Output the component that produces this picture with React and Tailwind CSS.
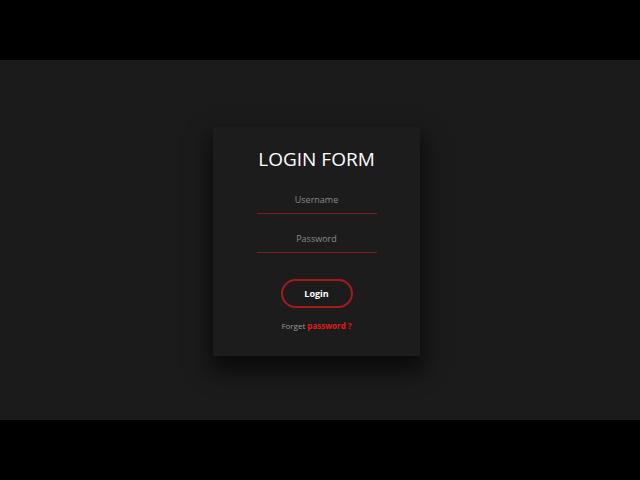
import React from "react";

/* ── Login card ── */
const LoginCard = () => (
  <div className="mr-[7px] mt-[3px] flex h-[229px] w-[207px] flex-col items-center bg-[#1c1c1c] pt-[18px] shadow-[0_12px_20px_4px_rgba(0,0,0,0.6)]">
    <h1 className="text-[19px] leading-[28px] font-medium text-white">LOGIN FORM</h1>

    <input
      type="text"
      placeholder="Username"
      className="mt-[12px] h-[29px] w-[120px] border-b border-[#801c1c] bg-transparent text-center text-[9px] text-white outline-none placeholder:text-[#8a8a8a]"
    />
    <input
      type="password"
      placeholder="Password"
      className="mt-[10px] h-[29px] w-[120px] border-b border-[#801c1c] bg-transparent text-center text-[9px] text-white outline-none placeholder:text-[#8a8a8a]"
    />

    <button className="mt-[26px] h-[29px] w-[72px] rounded-full border-2 border-[#a31b1b] text-[9px] font-bold text-white">
      Login
    </button>

    <p className="mt-[12px] text-[8px] text-[#9a9a9a]">
      Forget <span className="font-bold text-[#e01b1b]">password ?</span>
    </p>
  </div>
);

export default function App() {
  return (
    <div className="flex h-[480px] w-[640px] flex-col bg-black font-['Open_Sans',sans-serif]">
      <div className="h-[60px]" />
      <div className="flex h-[360px] items-center justify-center bg-[#1b1b1b]">
        <LoginCard />
      </div>
      <div className="h-[60px]" />
    </div>
  );
}
